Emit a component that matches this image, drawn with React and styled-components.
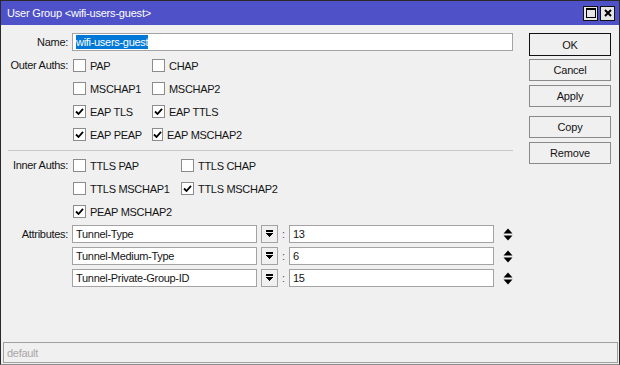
import React from "react";
import styled, { createGlobalStyle } from "styled-components";

const GlobalStyle = createGlobalStyle`
  html, body { margin: 0; padding: 0; background: #f0f0f0; }
  body {
    font-family: "Liberation Sans", Arial, sans-serif;
    font-size: 11px;
    color: #141414;
  }
`;

const Window = styled.div`
  width: 620px;
  height: 365px;
  box-sizing: border-box;
  border: 1px solid #2a2a2a;
  border-bottom-color: #8a8a8a;
  background: #f0f0f0;
  display: flex;
  flex-direction: column;
`;

const TitleBar = styled.div`
  height: 24px;
  background: #4f51c9;
  color: #fff;
  display: flex;
  align-items: center;
  padding: 0 4px 0 6px;
  font-size: 11px;
`;

const TitleText = styled.span`
  flex: 1;
  letter-spacing: -0.2px;
`;

const TitleButtons = styled.div`
  display: flex;
  gap: 2px;
`;

const TitleBtn = styled.div`
  width: 15px;
  height: 15px;
  box-sizing: border-box;
  border: 1px solid #111;
  background: #e6e6e6;
  display: flex;
  align-items: center;
  justify-content: center;
`;

const Main = styled.div`
  flex: 1;
  display: flex;
  padding: 8px 8px 0 3px;
`;

const Form = styled.div`
  flex: 1;
  display: grid;
  grid-template-columns: 64px 1fr;
  column-gap: 4px;
  align-content: start;
  padding-right: 1px;
`;

const Label = styled.div`
  text-align: right;
  height: ${p => p.h || 23}px;
  line-height: ${p => p.h || 23}px;
  margin-bottom: ${p => p.mb || 0}px;
  letter-spacing: -0.3px;
  white-space: nowrap;
`;

const Field = styled.div`
  height: ${p => p.h || 23}px;
  margin-bottom: ${p => p.mb || 0}px;
  display: flex;
  align-items: center;
`;

const TextBox = styled.div`
  height: ${p => p.h || 18}px;
  box-sizing: border-box;
  border: 1px solid #a3a3a3;
  background: #fff;
  display: flex;
  align-items: center;
  padding-left: 3px;
  letter-spacing: -0.3px;
  width: ${p => (p.w ? `${p.w}px` : "auto")};
  flex: ${p => (p.w ? "none" : 1)};
  white-space: nowrap;
  overflow: hidden;
`;

const Selected = styled.span`
  background: #0078d7;
  color: #fff;
  padding: 1px 0;
`;

const Separator = styled.div`
  grid-column: 1 / -1;
  height: 1px;
  background: #c8c8c8;
  margin: 4px 0 3px 4px;
`;

const CheckItem = styled.label`
  width: ${p => p.w}px;
  display: flex;
  align-items: center;
  gap: 4px;
  letter-spacing: -0.3px;
  white-space: nowrap;
`;

const Box = styled.span`
  width: 13px;
  height: 13px;
  box-sizing: border-box;
  border: 1px solid #8c8c8c;
  background: #fff;
  display: inline-flex;
  align-items: center;
  justify-content: center;
  margin-left: 1px;
`;

const DropBtn = styled.div`
  width: 17px;
  height: 18px;
  box-sizing: border-box;
  border: 1px solid #a3a3a3;
  background: #f0f0f0;
  margin-left: 4px;
  display: flex;
  align-items: center;
  justify-content: center;
`;

const Colon = styled.span`
  width: 11px;
  text-align: center;
  color: #7a3a7a;
`;

const Spinner = styled.div`
  width: 19px;
  display: flex;
  justify-content: flex-end;
`;

const Buttons = styled.div`
  width: 82px;
  margin-left: 15px;
  display: flex;
  flex-direction: column;
`;

const Button = styled.div`
  height: ${p => (p.primary ? 23 : 22)}px;
  box-sizing: border-box;
  border: 1px solid ${p => (p.primary ? "#111" : "#8a8a8a")};
  background: #f0f0f0;
  display: flex;
  align-items: center;
  justify-content: center;
  margin-bottom: ${p => p.mb ?? 4}px;
  letter-spacing: -0.2px;
`;

const StatusBar = styled.div`
  height: 21px;
  box-sizing: border-box;
  margin: 0 1px 1px 2px;
  border: 1px solid #a0a0a0;
  color: #a8a8a8;
  display: flex;
  align-items: center;
  padding-left: 3px;
  letter-spacing: -0.3px;
`;

const Check = ({ checked }) => (
  <Box>
    {checked && (
      <svg width="9" height="9" viewBox="0 0 9 9">
        <path d="M1 4.5 L3.5 7 L8 1.8" fill="none" stroke="#000" strokeWidth="1.8" />
      </svg>
    )}
  </Box>
);

const CheckRow = ({ items, w }) => (
  <Field>
    {items.map(([text, on]) => (
      <CheckItem key={text} w={w}>
        <Check checked={on} />
        {text}
      </CheckItem>
    ))}
  </Field>
);

const DropIcon = () => (
  <svg width="7" height="8" viewBox="0 0 7 8" shapeRendering="crispEdges">
    <rect x="0" y="0" width="7" height="2" fill="#000" />
    <rect x="0" y="3" width="7" height="1" fill="#000" />
    <rect x="1" y="4" width="5" height="1" fill="#000" />
    <rect x="2" y="5" width="3" height="1" fill="#000" />
    <rect x="3" y="6" width="1" height="1" fill="#000" />
  </svg>
);

const SpinIcon = () => (
  <svg width="10" height="13" viewBox="0 0 10 13">
    <path d="M0.5 5.5 L5 0.5 L9.5 5.5 Z" fill="#000" />
    <path d="M0.5 7.5 L5 12.5 L9.5 7.5 Z" fill="#000" />
  </svg>
);

const outer = [
  [["PAP", false], ["CHAP", false]],
  [["MSCHAP1", false], ["MSCHAP2", false]],
  [["EAP TLS", true], ["EAP TTLS", true]],
  [["EAP PEAP", true], ["EAP MSCHAP2", true]],
];

const inner = [
  [["TTLS PAP", false], ["TTLS CHAP", false]],
  [["TTLS MSCHAP1", false], ["TTLS MSCHAP2", true]],
  [["PEAP MSCHAP2", true]],
];

const attrs = [
  ["Tunnel-Type", "13"],
  ["Tunnel-Medium-Type", "6"],
  ["Tunnel-Private-Group-ID", "15"],
];

export default function App() {
  return (
    <>
      <GlobalStyle />
      <Window>
        <TitleBar>
          <TitleText>User Group &lt;wifi-users-guest&gt;</TitleText>
          <TitleButtons>
            <TitleBtn>
              <svg width="10" height="10" viewBox="0 0 10 10">
                <rect x="0.5" y="0.5" width="9" height="9" fill="none" stroke="#000" />
                <rect x="0" y="0" width="10" height="2" fill="#000" />
              </svg>
            </TitleBtn>
            <TitleBtn>
              <svg width="8" height="8" viewBox="0 0 8 8">
                <path d="M1 1 L7 7 M7 1 L1 7" stroke="#000" strokeWidth="2" />
              </svg>
            </TitleBtn>
          </TitleButtons>
        </TitleBar>

        <Main>
          <Form>
            <Label h={18} mb={3}>Name:</Label>
            <Field h={18} mb={3}>
              <TextBox>
                <Selected>wifi-users-guest</Selected>
              </TextBox>
            </Field>

            {outer.map((row, i) => (
              <React.Fragment key={"o" + i}>
                <Label>{i === 0 ? "Outer Auths:" : ""}</Label>
                <CheckRow items={row} w={79} />
              </React.Fragment>
            ))}

            <Separator />

            {inner.map((row, i) => (
              <React.Fragment key={"i" + i}>
                <Label>{i === 0 ? "Inner Auths:" : ""}</Label>
                <CheckRow items={row} w={108} />
              </React.Fragment>
            ))}

            {attrs.map(([name, val], i) => (
              <React.Fragment key={name}>
                <Label h={22}>{i === 0 ? "Attributes:" : ""}</Label>
                <Field h={22}>
                  <TextBox w={185}>{name}</TextBox>
                  <DropBtn>
                    <DropIcon />
                  </DropBtn>
                  <Colon>:</Colon>
                  <TextBox>{val}</TextBox>
                  <Spinner>
                    <SpinIcon />
                  </Spinner>
                </Field>
              </React.Fragment>
            ))}
          </Form>

          <Buttons>
            <Button primary mb={3}>OK</Button>
            <Button>Cancel</Button>
            <Button mb={9}>Apply</Button>
            <Button>Copy</Button>
            <Button>Remove</Button>
          </Buttons>
        </Main>

        <StatusBar>default</StatusBar>
      </Window>
    </>
  );
}
